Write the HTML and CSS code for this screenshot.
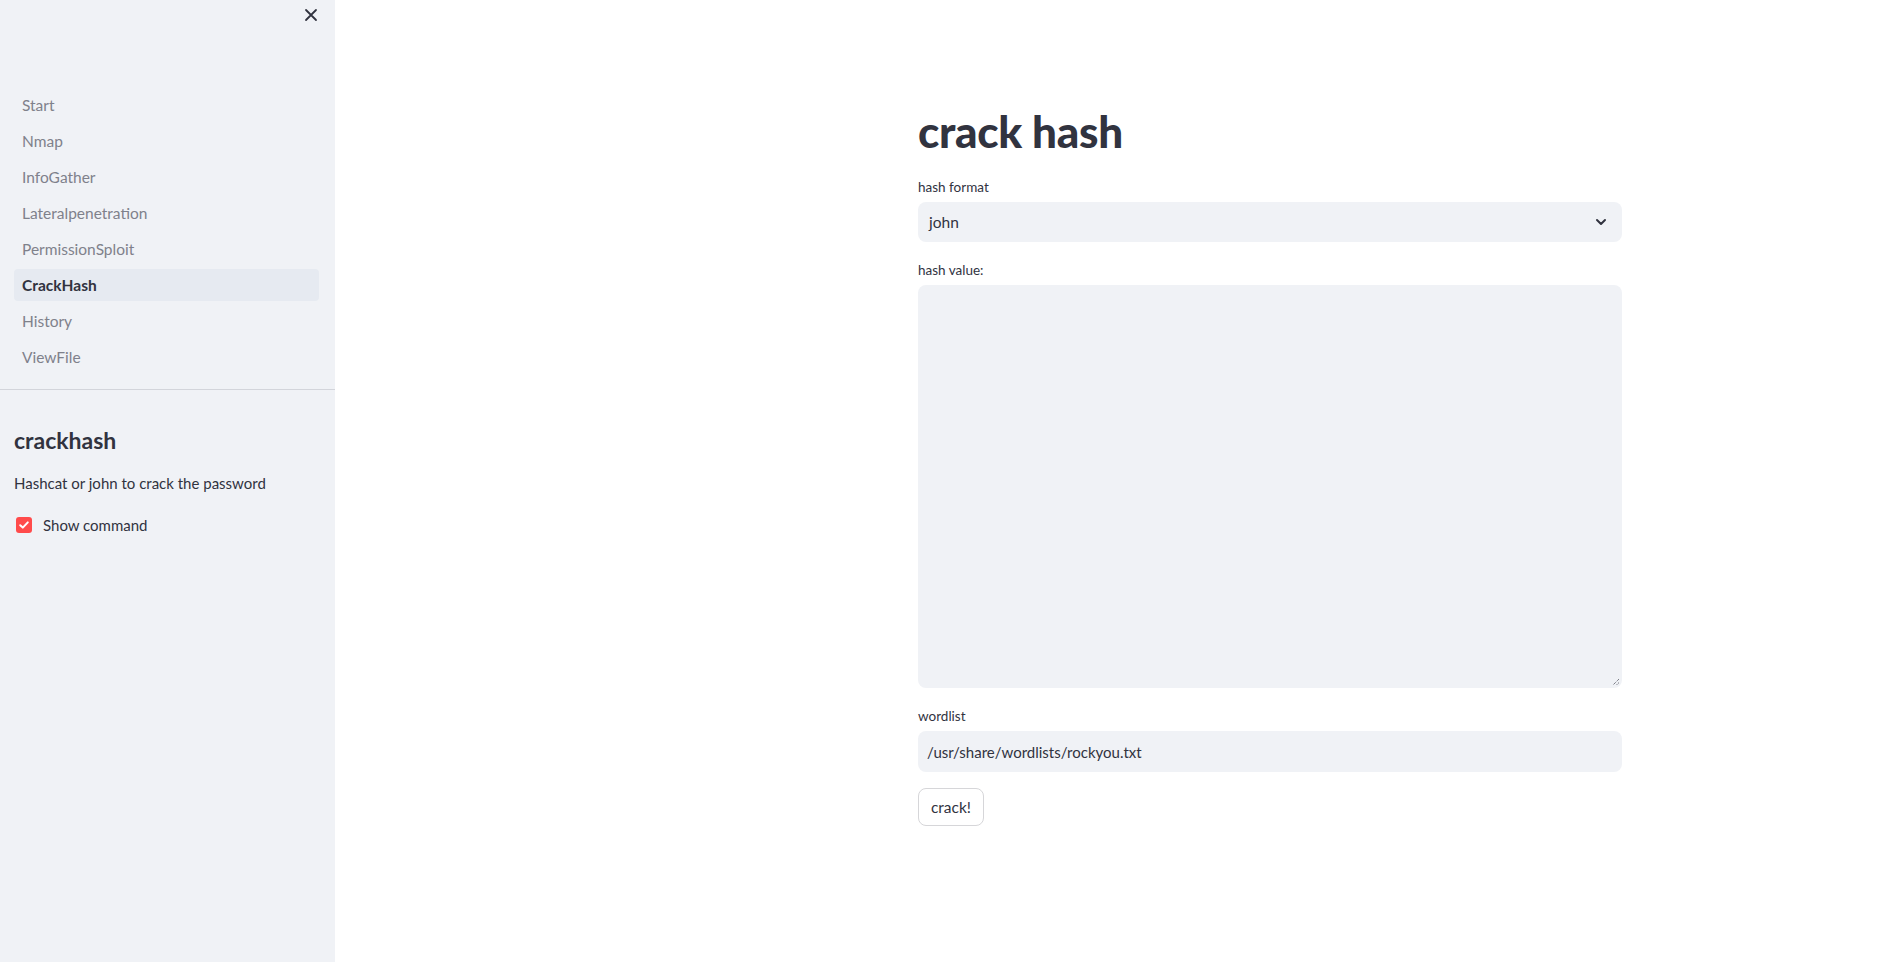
FILE: index.html
```html
<!DOCTYPE html>
<html>
<head>
<meta charset="utf-8">
<link rel="stylesheet" href="styles.css">
</head>
<body>
<div class="app">
  <aside class="sidebar">
    <div class="side-top">
      <button class="close" aria-label="close">
        <svg width="14" height="14" viewBox="0 0 14 14"><path d="M2 2L12 12M12 2L2 12" stroke="#31333F" stroke-width="1.8" stroke-linecap="round"/></svg>
      </button>
    </div>
    <nav class="nav">
      <a class="nav-item">Start</a>
      <a class="nav-item">Nmap</a>
      <a class="nav-item">InfoGather</a>
      <a class="nav-item">Lateralpenetration</a>
      <a class="nav-item">PermissionSploit</a>
      <a class="nav-item active">CrackHash</a>
      <a class="nav-item">History</a>
      <a class="nav-item">ViewFile</a>
    </nav>
    <div class="side-content">
      <h2 class="side-title">crackhash</h2>
      <p class="side-text">Hashcat or john to crack the password</p>
      <label class="check">
        <span class="box"><svg width="12" height="12" viewBox="0 0 12 12"><path d="M2.2 6.2L4.8 8.6L9.8 3.4" stroke="#fff" stroke-width="2" fill="none" stroke-linecap="round" stroke-linejoin="round"/></svg></span>
        <span>Show command</span>
      </label>
    </div>
  </aside>
  <main class="main">
    <div class="block">
      <h1 class="title">crack hash</h1>
      <div class="field">
        <div class="label">hash format</div>
        <div class="select">
          <span>john</span>
          <svg width="14" height="14" viewBox="0 0 14 14"><path d="M3 5L7 9L11 5" stroke="#31333F" stroke-width="2" fill="none" stroke-linecap="round" stroke-linejoin="round"/></svg>
        </div>
      </div>
      <div class="field">
        <div class="label">hash value:</div>
        <div class="textarea">
          <svg class="grip" width="8" height="8" viewBox="0 0 8 8"><path d="M7 1L1 7M7 4.5L4.5 7" stroke="#4a4c58" stroke-width="1" stroke-dasharray="1 1"/></svg>
        </div>
      </div>
      <div class="field last">
        <div class="label">wordlist</div>
        <div class="input">/usr/share/wordlists/rockyou.txt</div>
      </div>
      <button class="btn">crack!</button>
    </div>
  </main>
</div>
</body>
</html>
```

FILE: styles.css
```css
html, body {
  margin: 0;
  padding: 0;
  height: 100%;
}
body {
  font-family: "Lato", "Noto Sans", sans-serif;
  color: #31333F;
  background: #ffffff;
}
.app {
  display: flex;
  height: 962px;
}
.sidebar {
  width: 335px;
  flex: none;
  background: #f0f2f6;
  display: flex;
  flex-direction: column;
}
.side-top {
  display: flex;
  justify-content: flex-end;
  padding: 3px 12px 0 0;
  height: 83px;
  box-sizing: border-box;
}
.close {
  border: none;
  background: transparent;
  width: 24px;
  height: 24px;
  padding: 0;
  display: flex;
  align-items: center;
  justify-content: center;
}
.nav {
  display: flex;
  flex-direction: column;
  gap: 4px;
  padding: 6px 16px 16px 14px;
  border-bottom: 1px solid #d3d5db;
}
.nav-item {
  height: 32px;
  line-height: 32px;
  padding-left: 8px;
  font-size: 15.5px;
  color: #7f818b;
  border-radius: 4px;
}
.nav-item.active {
  background: #e6eaf1;
  color: #31333F;
  font-weight: 700;
}
.side-content {
  padding: 0 14px;
}
.side-title {
  margin: 34px 0 0;
  font-size: 23px;
  font-weight: 700;
  line-height: 32px;
}
.side-text {
  margin: 15px 0 0;
  font-size: 15px;
  line-height: 24px;
}
.check {
  display: flex;
  align-items: center;
  gap: 11px;
  margin-top: 18px;
  font-size: 15px;
  line-height: 24px;
  padding-left: 2px;
}
.box {
  width: 16px;
  height: 16px;
  border-radius: 3px;
  background: #ff4b4b;
  display: flex;
  align-items: center;
  justify-content: center;
}
.main {
  flex: 1;
  padding: 104px 0 0 583px;
}
.block {
  width: 704px;
  display: flex;
  flex-direction: column;
}
.title {
  margin: 0 0 19px;
  font-size: 44px;
  font-weight: 900;
  line-height: 54px;
  letter-spacing: -0.3px;
}
.field {
  margin-bottom: 18px;
}
.field.last {
  margin-bottom: 16px;
}
.label {
  font-size: 13.5px;
  line-height: 20px;
  margin-bottom: 5px;
}
.select {
  height: 40px;
  background: #f0f2f6;
  border-radius: 8px;
  display: flex;
  align-items: center;
  justify-content: space-between;
  padding: 0 14px 0 11px;
  font-size: 15.5px;
}
.textarea {
  height: 403px;
  background: #f0f2f6;
  border-radius: 8px;
  position: relative;
}
.grip {
  position: absolute;
  right: 2px;
  bottom: 2px;
}
.input {
  height: 41px;
  background: #f0f2f6;
  border-radius: 8px;
  display: flex;
  align-items: center;
  padding: 0 9px;
  font-size: 15px;
}
.btn {
  align-self: flex-start;
  width: 66px;
  height: 38px;
  background: #fff;
  border: 1px solid #d6d6d9;
  border-radius: 8px;
  font-family: inherit;
  font-size: 15.5px;
  color: #31333F;
  padding: 0;
}
```
